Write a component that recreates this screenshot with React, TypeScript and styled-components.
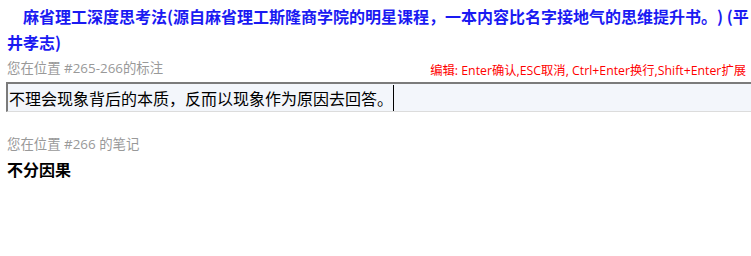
import React from "react";
import styled, { createGlobalStyle } from "styled-components";

const Global = createGlobalStyle`
  html, body { margin: 0; padding: 0; background: #ffffff; }
  body {
    font-family: "Noto Sans CJK SC", "Noto Sans", sans-serif;
    overflow: hidden;
    text-spacing-trim: space-all;
  }
`;

const Page = styled.div`
  padding: 3px 0 0 7px;
  width: 751px;
  box-sizing: border-box;
`;

const Title = styled.div`
  font-size: 16px;
  line-height: 26px;
  font-weight: 700;
  color: #1a1af2;
  text-indent: 16px;
`;

const HeaderRow = styled.div`
  display: flex;
  justify-content: space-between;
  align-items: flex-end;
  margin-top: 4px;
  padding-right: 5px;
`;

const Label = styled.div<{ $top?: number }>`
  font-family: "Open Sans", "Noto Sans CJK SC", sans-serif;
  font-size: 13.4px;
  line-height: 18px;
  color: #999999;
  margin-top: ${(p) => p.$top ?? 0}px;
`;

const Hint = styled.div`
  font-family: "Open Sans", "Noto Sans CJK SC", sans-serif;
  font-size: 12.3px;
  line-height: 18px;
  color: #ff0000;
  margin-bottom: -3px;
`;

const EditBox = styled.div`
  margin-top: 5px;
  margin-left: -1px;
  margin-right: -20px;
  height: 30px;
  box-sizing: border-box;
  border-style: solid;
  border-width: 2px 1px 1px 2px;
  border-color: #7b7b7b #dcdcdc #dcdcdc #7b7b7b;
  background: #f3f6fb;
  display: flex;
  align-items: stretch;
  padding: 1px 0 0 1px;
  font-size: 16px;
  color: #000000;
`;

const EditText = styled.span`
  line-height: 26px;
`;

const Caret = styled.span`
  width: 0;
  border-left: 1.5px solid #000;
`;

const NoteText = styled.div`
  font-size: 16px;
  line-height: 22px;
  font-weight: 700;
  color: #000;
  margin-top: 5px;
`;

export default function App() {
  return (
    <>
      <Global />
      <Page>
        <Title>
          麻省理工深度思考法(源自麻省理工斯隆商学院的明星课程，一本内容比名字接地气的思维提升书。) (平井孝志)
        </Title>
        <HeaderRow>
          <Label>您在位置 #265-266的标注</Label>
          <Hint>编辑: Enter确认,ESC取消, Ctrl+Enter换行,Shift+Enter扩展</Hint>
        </HeaderRow>
        <EditBox>
          <EditText>不理会现象背后的本质，反而以现象作为原因去回答。</EditText>
          <Caret />
        </EditBox>
        <Label $top={23}>您在位置 #266 的笔记</Label>
        <NoteText>不分因果</NoteText>
      </Page>
    </>
  );
}
